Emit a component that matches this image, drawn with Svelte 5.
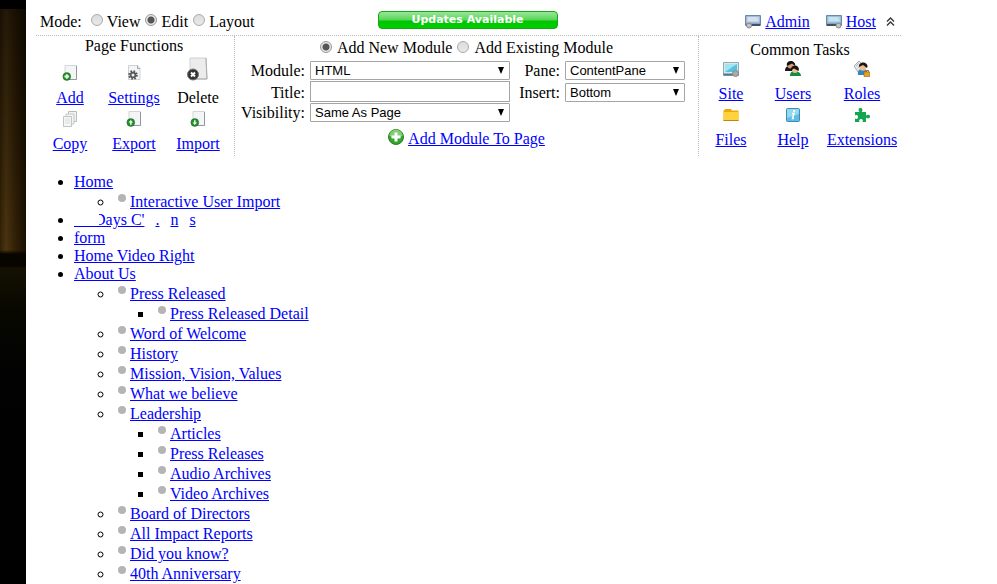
<script>
  let mode = $state('Edit');
  let source = $state('Add New Module');

  const pageFunctions = [
    { name: 'Add', icon: 'add' },
    { name: 'Settings', icon: 'settings' },
    { name: 'Delete', icon: 'delete', disabled: true },
    { name: 'Copy', icon: 'copy' },
    { name: 'Export', icon: 'export' },
    { name: 'Import', icon: 'import' }
  ];

  const commonTasks = [
    { name: 'Site', icon: 'site' },
    { name: 'Users', icon: 'users' },
    { name: 'Roles', icon: 'roles' },
    { name: 'Files', icon: 'files' },
    { name: 'Help', icon: 'help' },
    { name: 'Extensions', icon: 'extensions' }
  ];

  const menu = [
    { name: 'Home', items: [{ name: 'Interactive User Import' }] },
    { partial: true },
    { name: 'form' },
    { name: 'Home Video Right' },
    {
      name: 'About Us',
      items: [
        { name: 'Press Released', items: [{ name: 'Press Released Detail' }] },
        { name: 'Word of Welcome' },
        { name: 'History' },
        { name: 'Mission, Vision, Values' },
        { name: 'What we believe' },
        {
          name: 'Leadership',
          items: [
            { name: 'Articles' },
            { name: 'Press Releases' },
            { name: 'Audio Archives' },
            { name: 'Video Archives' }
          ]
        },
        { name: 'Board of Directors' },
        { name: 'All Impact Reports' },
        { name: 'Did you know?' },
        { name: '40th Anniversary' }
      ]
    }
  ];
</script>

{#snippet icon(kind)}
  <svg class="icon" class:large={kind === 'delete'} viewBox={kind === 'delete' ? '0 0 22 24' : '0 0 16 16'} aria-hidden="true">
    {#if kind === 'add' || kind === 'export' || kind === 'import'}
      <path d="M3 .5h11.500v14H3z" fill="#f3f5f6" stroke="#d3d6d8" />
      <path d="M14.500 1v13.500H7" fill="none" stroke="#92989c" />
      <circle cx="4.800" cy="11.500" r="3.900" fill="#238c2d" stroke="#176b20" stroke-width=".5" />
      {#if kind === 'add'}
        <path d="M4.800 9.200v4.600M2.500 11.500h4.600" stroke="#e9ffe7" stroke-width="1.800" />
      {:else if kind === 'export'}
        <path d="M4.800 9L2.500 11.500H4v2.300h1.600v-2.300h1.500z" fill="#e9ffe7" />
      {:else}
        <path d="M4.800 14l2.300-2.500H5.600V9.200H4v2.300H2.500z" fill="#e9ffe7" />
      {/if}
    {:else if kind === 'settings'}
      <path d="M2.500.5h9l2.500 3v11H2.500z" fill="#f3f4f5" stroke="#cfd2d4" />
      <path d="M11.500.5v3H14" fill="none" stroke="#a3a7aa" />
      <circle cx="7" cy="10" r="3.800" fill="none" stroke="#555" stroke-width="2" stroke-dasharray="1.600 1.385" />
      <circle cx="7" cy="10" r="2.400" fill="#eee" stroke="#555" stroke-width="1.700" />
    {:else if kind === 'delete'}
      <path d="M3 1h16l1 21H3z" fill="#ececec" stroke="#cfd0d1" />
      <path d="M19 1l1 21H9" fill="none" stroke="#aaa" />
      <circle cx="6" cy="17.500" r="5.500" fill="#333" stroke="#777" />
      <path d="M4 15.500l4 4M8 15.500l-4 4" stroke="#fff" stroke-width="2" />
    {:else if kind === 'copy'}
      <path d="M6.500.5h8v10h-8z" fill="#f1f2f2" stroke="#b9bcbe" />
      <path d="M4 3h8v10H4z" fill="#f3f4f4" stroke="#c5c7c8" />
      <path d="M1.500 5.500h8v10h-8z" fill="#f5f6f6" stroke="#c1c3c5" />
      <path d="M3 8h5M3 10h5M3 12h5" stroke="#ddd" />
    {:else if kind === 'site'}
      <path d="M.5 1.500h15v13H.5z" fill="#d6e8ee" stroke="#8fabb6" />
      <path d="M2 3h12v8H2z" fill="#55c3df" />
      <path d="M2 3h12L2 11z" fill="#a2e2f1" />
      <path d="M.5 12.500h15v2H.5z" fill="#537988" />
      <circle cx="12.500" cy="12.500" r="3" fill="#aaa" stroke="#888" />
    {:else if kind === 'users'}
      <path d="M0 10c0-4 2-5 5-5s5 2 5 5z" fill="#191919" />
      <circle cx="5.500" cy="4.500" r="3" fill="#d89c77" />
      <path d="M2 5C1 1 4 0 6 0s5 2 4 5L7 2.500z" fill="#111" />
      <path d="M5 15c0-4 2-5 5-5s6 2 6 5z" fill="#128b43" />
      <circle cx="10" cy="9" r="3" fill="#efbd91" />
      <path d="M6 9.500C5.500 6 8 4.500 10 4.500s5 2 3.500 5.500L9 7.500z" fill="#171412" />
    {:else if kind === 'roles'}
      <path d="M0 5l5-5 4 4-5 7z" fill="#e4e7e9" stroke="#a9aeb2" />
      <path d="M2 5l3-3M4 7l3-3" stroke="#bbb" />
      <path d="M4 14c-1-4 2-6 5-6s5 2 5 6z" fill="#2d89c5" />
      <circle cx="9" cy="6.500" r="3.300" fill="#efbd91" />
      <path d="M5 6C4.500 3 7 1.500 9 1.500s6 2 4 5.500L9 4z" fill="#181818" />
      <path d="M10 11h6v4.500h-6z" fill="#e5a02a" stroke="#9d6212" stroke-width=".6" />
      <path d="M11.500 11V9.500h3V11" fill="none" stroke="#a77221" />
    {:else if kind === 'files'}
      <path d="M.5 3.500V14h15V3.500H9L8 2H2.500z" fill="#eaa90c" />
      <path d="M.5 5h15v8H.5z" fill="#ffd33e" />
      <path d="M.5 13.500h15" stroke="#be850e" />
    {:else if kind === 'help'}
      <rect x="1.500" y="1.500" width="13" height="13" rx="1" fill="#5ebee5" stroke="#398eb6" />
      <path d="M2 2h12v5L2 11z" fill="#91d8f0" />
      <path d="M7 6.500h2l-1.500 5H9" fill="none" stroke="#fff" stroke-width="1.500" />
      <circle cx="9.200" cy="4" r="1.200" fill="#fff" />
    {:else if kind === 'extensions'}
      <path d="M1 5h4.500C4 3 4.500 1 6.500 1S9 3 7.800 5H12v3.500c2-1.500 4-1 4 1s-2 2.500-4 1V15H8.500c1-2-.2-3-1.500-3s-2.500 1-1.500 3H1v-3.500c2 1.200 3 0 3-1.500S3 7.500 1 8.500z" fill="#12a650" />
    {:else if kind === 'admin' || kind === 'host'}
      <path d="M.5 1.500h15v9H.5z" fill="#87a6c7" stroke="#6c88aa" />
      <path d="M1.500 2.500h13v6h-13z" fill={kind === 'host' ? '#aad9e5' : '#c3d2e4'} />
      <path d="M3 4h9M3 6h10" stroke="#e5eff7" />
      <path d="M.5 10h15v2H.5z" fill="#46515d" />
      <circle cx={kind === 'host' ? 12.5 : 4} cy="11.500" r="2.500" fill="#c4c4c4" stroke="#888" />
    {:else if kind === 'plus'}
      <circle cx="8" cy="8" r="7.500" fill="#32a32d" stroke="#288327" />
      <path d="M1.500 7a6.500 6.500 0 0 1 13 0Q8 10 1.500 7z" fill="#83cf70" />
      <path d="M8 3.500v9M3.500 8h9" stroke="#fff" stroke-width="3" />
    {/if}
  </svg>
{/snippet}

{#snippet actions(list)}
  {#each list as item}
    <div class="action">
      <span class="picture">{@render icon(item.icon)}</span>
      {#if item.disabled}
        <span>{item.name}</span>
      {:else}
        <a href="#{item.icon}">{item.name}</a>
      {/if}
    </div>
  {/each}
{/snippet}

{#snippet tree(items, nested)}
  <ul class:nested>
    {#each items as item}
      <li>
        {#if nested}<span class="dot"></span>{/if}{#if item.partial}<a class="partial" href="#days"><span class="lead"></span><span class="clipped">Days C'</span><span class="blank"></span><span>.</span><span class="blank short"></span><span>n</span><span class="blank"></span><span>s</span></a>{:else}<a href="#page">{item.name}</a>{/if}
        {#if item.items}{@render tree(item.items, true)}{/if}
      </li>
    {/each}
  </ul>
{/snippet}

<div class="page">
  <div class="backdrop"></div>
  <main>
    <section class="panel">
      <header>
        <div class="modes">
          <span class="caption">Mode:</span>
          {#each ['View', 'Edit', 'Layout'] as option}
            <label><input type="radio" name="mode" value={option} bind:group={mode} />{option}</label>
          {/each}
        </div>
        <button class="updates">Updates Available</button>
        <nav>
          {@render icon('admin')}<a class="admin" href="#admin">Admin</a>
          {@render icon('host')}<a href="#host">Host</a>
          <button class="collapse" aria-label="Collapse panel">
            <svg viewBox="0 0 9 10" aria-hidden="true"><path d="M1 4.500l3.500-3.500L8 4.500M1 8.500L4.500 5 8 8.500" fill="none" stroke="#333" stroke-width="1.300" /></svg>
          </button>
        </nav>
      </header>

      <div class="columns">
        <section class="functions">
          <div class="heading">Page Functions</div>
          <div class="grid">{@render actions(pageFunctions)}</div>
        </section>

        <section class="module">
          <div class="sources">
            {#each ['Add New Module', 'Add Existing Module'] as option}
              <label><input type="radio" name="source" value={option} bind:group={source} />{option}</label>
            {/each}
          </div>
          <div class="form">
            <label for="module">Module:</label>
            <div class="select"><select id="module"><option>HTML</option></select></div>
            <label for="pane">Pane:</label>
            <div class="select"><select id="pane"><option>ContentPane</option></select></div>
            <label for="title">Title:</label>
            <input id="title" type="text" />
            <label for="insert">Insert:</label>
            <div class="select"><select id="insert"><option>Bottom</option></select></div>
            <label for="visibility">Visibility:</label>
            <div class="select"><select id="visibility"><option>Same As Page</option></select></div>
          </div>
          <div class="submit">{@render icon('plus')}<a href="#add-module">Add Module To Page</a></div>
        </section>

        <section class="tasks">
          <div class="heading">Common Tasks</div>
          <div class="grid">{@render actions(commonTasks)}</div>
        </section>
      </div>
    </section>

    {@render tree(menu, false)}
  </main>
</div>

<style>
  .page {
    display: flex;
    min-height: 100vh;
    background: #fff;
    color: #000;
    font: 16px/18px "Liberation Serif", "Times New Roman", serif;
  }
  .backdrop {
    flex: 0 0 26px;
    background:
      linear-gradient(#000 0 9px, #0000 9px 250px, #080500 254px 266px, #151002 268px, #080801 310px, #020202 370px, #000),
      linear-gradient(#0008, #0000 250px),
      linear-gradient(90deg, #332006, #4b3410 6px, #332106 15px, #191000);
  }
  main { flex: 1; min-width: 0; }
  a { color: #00f; text-decoration: underline; }
  .panel { max-width: 865px; margin-left: 10px; }
  header {
    display: grid;
    grid-template-columns: 1fr auto 1fr;
    align-items: center;
    height: 36px;
    padding: 4px 6px 0 4px;
    box-sizing: border-box;
    border-bottom: 1px dotted #bbb;
  }
  .modes, nav, .sources, .submit { display: flex; align-items: center; }
  .modes { gap: 5px; padding-top: 5px; }
  .caption { margin-right: 4px; }
  .modes label, .sources label { display: flex; gap: 4px; }
  input[type="radio"] {
    appearance: none;
    width: 12px;
    height: 12px;
    margin: 1px 0 0;
    border: 1px solid #aaa;
    border-radius: 50%;
    background: linear-gradient(#ddd, #e8e8e8);
  }
  input[type="radio"]:checked {
    background: radial-gradient(circle, #555 0 3px, #e6e6e6 4px);
    border-color: #999;
  }
  .updates {
    width: 180px;
    height: 18px;
    padding: 0;
    border: 1px solid #12a812;
    border-radius: 4px;
    background: linear-gradient(#9be59b, #55d655 8px, #00c400 9px, #00cf00);
    color: #fff;
    font: bold 11px/14px "DejaVu Sans", Verdana, sans-serif;
  }
  nav { justify-content: flex-end; gap: 4px; padding-top: 5px; }
  .admin { margin-right: 12px; }
  .collapse {
    display: flex;
    margin-left: 6px;
    padding: 0;
    border: 0;
    background: none;
  }
  .collapse svg { width: 9px; height: 10px; }
  .icon { display: block; width: 16px; height: 16px; flex: none; }
  .large { width: 22px; height: 24px; }
  .columns {
    display: grid;
    grid-template-columns: 199px 1fr 203px;
    height: 120px;
  }
  .heading { text-align: center; }
  .functions { padding: 1px 4px 0 2px; border-right: 1px dotted #bbb; }
  .tasks { padding: 5px 1px 0; border-left: 1px dotted #bbb; }
  .grid { display: grid; grid-template-columns: 64px 64px 64px; }
  .tasks .grid { grid-template-columns: 62px 62px 76px; }
  .functions .grid { padding-top: 8px; }
  .action {
    display: flex;
    flex-direction: column;
    align-items: center;
    gap: 8px;
    height: 46px;
  }
  .picture { display: flex; align-items: flex-end; height: 18px; }
  .module { padding-top: 3px; }
  .sources { justify-content: center; gap: 5px; }
  .sources label { align-items: center; gap: 5px; }
  .sources input[type="radio"] { margin: 0 0 3px; }
  .form {
    display: grid;
    grid-template-columns: 70px 200px 45px 120px;
    grid-template-rows: 19px 21px 19px;
    column-gap: 5px;
    row-gap: 1px;
    align-items: end;
    padding-top: 4px;
  }
  .form label { text-align: right; }
  .select { position: relative; }
  .select::after {
    content: "";
    position: absolute;
    top: 6px;
    right: 6px;
    border: solid transparent;
    border-width: 7px 3px 0;
    border-top-color: #000;
    pointer-events: none;
  }
  select, input[type="text"] {
    appearance: none;
    display: block;
    width: 100%;
    height: 19px;
    box-sizing: border-box;
    padding: 0 4px;
    border: 1px solid #a5a5a5;
    border-radius: 1px;
    background: #fff;
    color: #000;
    font: 13px/17px "Liberation Sans", Arial, sans-serif;
  }
  input[type="text"] { height: 21px; border-radius: 0; }
  .submit { justify-content: center; gap: 4px; padding-top: 4px; }
  .submit a { padding-top: 4px; }
  ul { margin: 17px 0 0 8px; padding: 0 0 0 40px; list-style: disc; }
  .nested { margin: 0; list-style: circle; }
  .nested li { padding-top: 2px; }
  .nested .nested { list-style: square; }
  .dot {
    display: inline-block;
    width: 8px;
    height: 8px;
    margin: 0 4px;
    border-radius: 50%;
    background: #b5b5b5;
    vertical-align: 5px;
  }
  .partial { display: inline-flex; height: 18px; vertical-align: top; text-decoration: none; }
  .partial span { text-decoration: underline; }
  .partial .lead { width: 20px; height: 15px; border-bottom: 1px solid #00f; }
  .partial .clipped { position: relative; }
  .partial .clipped::before {
    content: "";
    position: absolute;
    inset: 0 auto 4px 0;
    width: 5px;
    background: #fff;
  }
  .blank { width: 11px; }
</style>
